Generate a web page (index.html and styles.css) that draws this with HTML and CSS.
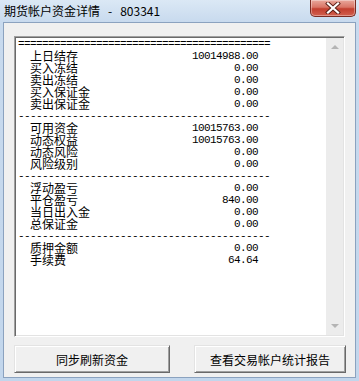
FILE: index.html
```html
<!DOCTYPE html>
<html lang="zh-CN">
<head>
  <meta charset="UTF-8">
  <title>期货帐户资金详情 - 803341</title>
  <link rel="stylesheet" href="styles.css">
</head>
<body>
  <div class="window">
    <div class="titlebar">
      <span class="title">期货帐户资金详情<span class="sep">-</span>803341</span>
      <span class="close-btn">
        <svg width="16" height="12" viewBox="0 0 16 12">
          <path d="M3 1.5 L13 10.5 M13 1.5 L3 10.5" stroke="#5a1e16" stroke-width="4" stroke-linecap="square"/>
          <path d="M3 1.5 L13 10.5 M13 1.5 L3 10.5" stroke="#fff" stroke-width="2.2" stroke-linecap="square"/>
        </svg>
      </span>
    </div>

    <div class="client">
      <div class="report">
        <div class="report-text">
          <div class="rule">==========================================</div>
          <div class="row"><span class="label">上日结存</span><span class="value">10014988.00</span></div>
          <div class="row"><span class="label">买入冻结</span><span class="value">0.00</span></div>
          <div class="row"><span class="label">卖出冻结</span><span class="value">0.00</span></div>
          <div class="row"><span class="label">买入保证金</span><span class="value">0.00</span></div>
          <div class="row"><span class="label">卖出保证金</span><span class="value">0.00</span></div>
          <div class="rule">------------------------------------------</div>
          <div class="row"><span class="label">可用资金</span><span class="value">10015763.00</span></div>
          <div class="row"><span class="label">动态权益</span><span class="value">10015763.00</span></div>
          <div class="row"><span class="label">动态风险</span><span class="value">0.00</span></div>
          <div class="row"><span class="label">风险级别</span><span class="value">0.00</span></div>
          <div class="rule">------------------------------------------</div>
          <div class="row"><span class="label">浮动盈亏</span><span class="value">0.00</span></div>
          <div class="row"><span class="label">平仓盈亏</span><span class="value">840.00</span></div>
          <div class="row"><span class="label">当日出入金</span><span class="value">0.00</span></div>
          <div class="row"><span class="label">总保证金</span><span class="value">0.00</span></div>
          <div class="rule">------------------------------------------</div>
          <div class="row"><span class="label">质押金额</span><span class="value">0.00</span></div>
          <div class="row"><span class="label">手续费</span><span class="value">64.64</span></div>
        </div>
        <div class="scrollbar">
          <span class="arrow up"></span>
          <span class="arrow down"></span>
        </div>
      </div>

      <div class="buttons">
        <button class="btn btn-sync">同步刷新资金</button>
        <button class="btn btn-report">查看交易帐户统计报告</button>
      </div>
    </div>
  </div>
</body>
</html>
```

FILE: styles.css
```css
* {
  margin: 0;
  padding: 0;
  box-sizing: border-box;
}
body {
  width: 359px;
  height: 381px;
  overflow: hidden;
  background: #c2d6ec;
  font-family: "Noto Sans CJK SC", sans-serif;
  color: #000;
}
.window {
  width: 359px;
  height: 381px;
  display: flex;
  flex-direction: column;
  background: linear-gradient(to bottom, #dbe8f5 0, #c8daee 22px, #c2d6ec 100%);
}
.titlebar {
  height: 22px;
  display: flex;
  align-items: flex-start;
  padding-left: 4px;
}
.title {
  font-size: 12px;
  line-height: 22px;
  color: #000;
}
.title .sep {
  margin: 0 8px;
}
.close-btn {
  margin-left: auto;
  margin-right: 3px;
  width: 46px;
  height: 17px;
  display: flex;
  align-items: center;
  justify-content: center;
  border: 1px solid #7a2b22;
  border-top: none;
  border-radius: 0 0 5px 5px;
  background: linear-gradient(to bottom, #e9a89c 0, #d97566 45%, #c23f2f 55%, #d2604f 100%);
  box-shadow: inset 0 0 0 1px rgba(255,255,255,0.35);
}
.client {
  flex: 1;
  margin: 0 3px 3px 3px;
  border: 1px solid #8ba2bf;
  background: #f0f0f0;
  padding: 13px 0 0 10px;
}
.report {
  width: 331px;
  height: 301px;
  display: flex;
  background: #fff;
  border: 1px solid;
  border-color: #a0a0a0 #fff #fff #a0a0a0;
  box-shadow: inset 1px 1px 0 #696969, inset -1px -1px 0 #e3e3e3;
  padding: 1px 1px 1px 2px;
}
.report-text {
  flex: 1;
  padding-left: 1px;
}
.rule, .value {
  font-family: "Liberation Mono", monospace;
  font-size: 11px;
  letter-spacing: -0.6px;
  white-space: pre;
}
.rule {
  height: 12px;
  line-height: 12px;
  overflow: hidden;
}
.row {
  width: 240px;
  height: 12px;
  line-height: 12px;
  display: flex;
  justify-content: space-between;
}
.label {
  padding-left: 12px;
  font-size: 12px;
}
.scrollbar {
  width: 17px;
  background: #ececec;
  display: flex;
  flex-direction: column;
  justify-content: space-between;
  align-items: center;
  padding: 7px 0;
}
.arrow {
  width: 0;
  height: 0;
  border-left: 4px solid transparent;
  border-right: 4px solid transparent;
}
.arrow.up {
  border-bottom: 4px solid #b4b4b4;
}
.arrow.down {
  border-top: 4px solid #b4b4b4;
}
.buttons {
  display: flex;
  margin-top: 8px;
}
.btn {
  height: 28px;
  font-family: "Noto Sans CJK SC", sans-serif;
  font-size: 12px;
  color: #000;
  background: #f0f0f0;
  border: 1px solid;
  border-color: #e3e3e3 #696969 #696969 #e3e3e3;
  box-shadow: inset 1px 1px 0 #fff, inset -1px -1px 0 #a0a0a0;
  cursor: pointer;
}
.btn-sync {
  width: 156px;
}
.btn-report {
  width: 152px;
  margin-left: 24px;
}
```
